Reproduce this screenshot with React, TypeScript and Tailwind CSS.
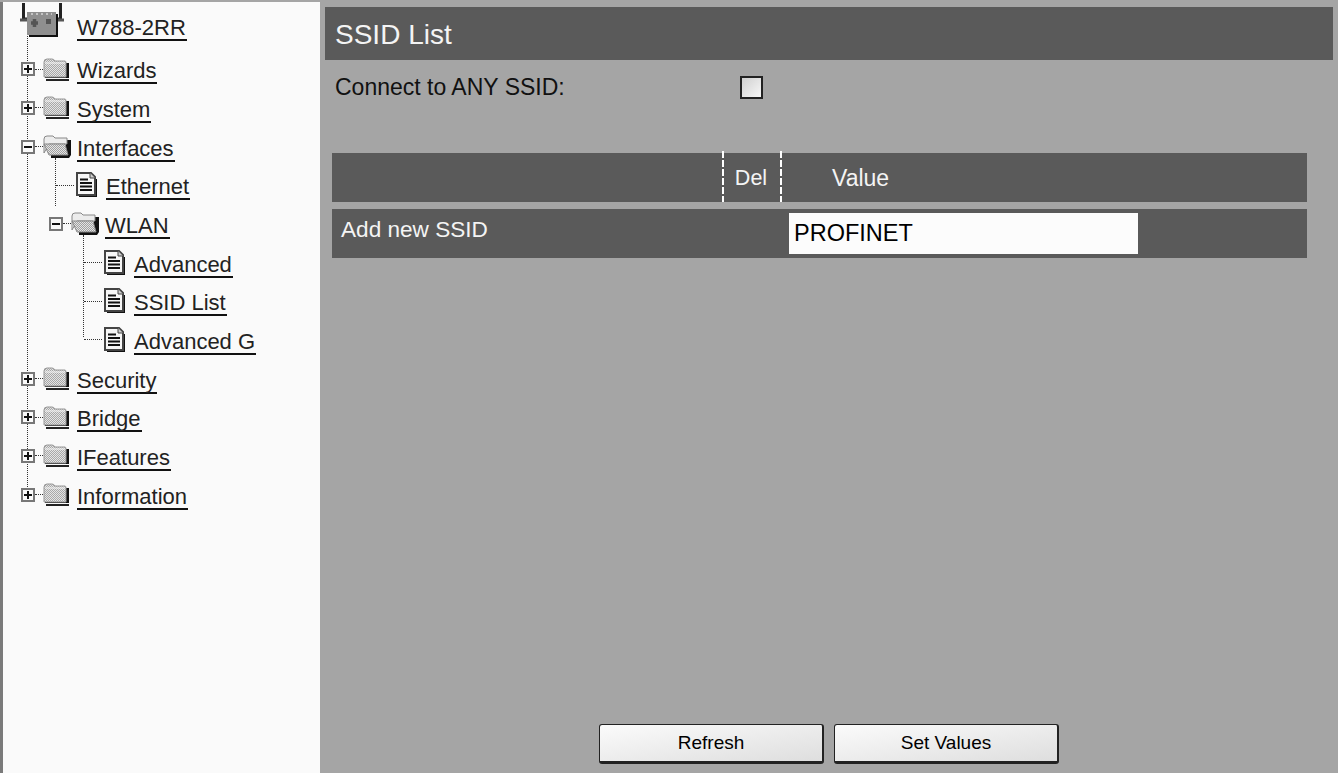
const font = { fontFamily: '"Liberation Sans", Arial, sans-serif' };

function ClosedFolder() {
  return (
    <svg width="26" height="23" viewBox="0 0 26 23" className="mb-1 shrink-0">
      <defs>
        <pattern id="ditherClosed" width="2" height="2" patternUnits="userSpaceOnUse">
          <rect width="2" height="2" fill="#e4e4e4" />
          <rect width="1" height="1" fill="#a8a8a8" />
          <rect x="1" y="1" width="1" height="1" fill="#a8a8a8" />
        </pattern>
      </defs>
      <path d="M2 20 H26 V5 H23 V19 H2 Z" fill="#111" />
      <rect x="3" y="21" width="23" height="2" fill="#222" />
      <path d="M1 19 V4 Q1 1 4 1 H9 Q11 1 12 3 H22 Q23 3 23 5 V19 Z" fill="url(#ditherClosed)" stroke="#999" strokeWidth="1" />
      <path d="M2 5 H22" stroke="#f4f4f4" strokeWidth="1" />
    </svg>
  );
}

function OpenFolder() {
  return (
    <svg width="28" height="23" viewBox="0 0 28 23" className="mb-1 shrink-0">
      <defs>
        <pattern id="ditherOpen" width="2" height="2" patternUnits="userSpaceOnUse">
          <rect width="2" height="2" fill="#e4e4e4" />
          <rect width="1" height="1" fill="#a0a0a0" />
          <rect x="1" y="1" width="1" height="1" fill="#a0a0a0" />
        </pattern>
      </defs>
      <path d="M23 5 H28 V20 L26 23 H8 V20 H23 Z" fill="#111" />
      <path d="M1 18 V4 Q1 1 4 1 H10 L12 3 H24 V9 H6 Z" fill="#ececec" stroke="#888" strokeWidth="1" />
      <path d="M1 9 H22 L25 20 H6 Z" fill="url(#ditherOpen)" stroke="#888" strokeWidth="1" />
    </svg>
  );
}

function PageIcon() {
  return (
    <svg width="21" height="26" viewBox="0 0 21 26" className="mb-1 shrink-0">
      <path d="M3 25 H21 V7 H19 V23 H3 Z" fill="#111" />
      <path d="M1 1 H15 L19 5 V23 H1 Z" fill="#f6f6f6" stroke="#444" strokeWidth="2" />
      <path d="M14 1 V6 H19" fill="#cfcfcf" stroke="#444" strokeWidth="1" />
      <path d="M4 7.5 H12 M4 11 H16 M4 14.5 H16 M4 18 H16" stroke="#111" strokeWidth="2" />
    </svg>
  );
}

function DeviceIcon() {
  return (
    <svg width="44" height="34" viewBox="0 0 44 34" className="shrink-0">
      <path d="M3.5 0 V16 H8 M40.5 0 V16 H35" stroke="#222" strokeWidth="3" fill="none" />
      <path d="M0 17 H8 M36 17 H44" stroke="#555" strokeWidth="3" />
      <rect x="9" y="11" width="29" height="23" fill="#111" />
      <rect x="7" y="9" width="29" height="23" fill="#8f8f8f" />
      <path d="M11 11 H32" stroke="#d8d8d8" strokeWidth="1.5" strokeDasharray="2 3" />
      <path d="M11 20 H18 M14.5 16 V24" stroke="#555" strokeWidth="3.5" />
      <rect x="26" y="16" width="5" height="5" fill="#555" />
    </svg>
  );
}

function ExpandBox({ open }: { open: boolean }) {
  return (
    <span className="relative mb-1 size-[14px] shrink-0 border-2 border-[#777] bg-[#fafafa]">
      <span className="absolute left-[1px] top-[4px] h-[2px] w-[8px] bg-[#111]" />
      {!open && <span className="absolute left-[4px] top-[1px] h-[8px] w-[2px] bg-[#111]" />}
    </span>
  );
}

function Label({ text }: { text: string }) {
  return (
    <span className="h-[26px] border-b-2 border-[#111] pr-[1px] text-[22px] leading-[26px] text-[#222]">
      {text}
    </span>
  );
}

function FolderRow({ text, open, indent }: { text: string; open?: boolean; indent: string }) {
  return (
    <div className={`flex h-[38.67px] items-center ${indent}`}>
      <ExpandBox open={!!open} />
      <span className="mb-1 w-[8px] shrink-0 border-t border-dotted border-[#333]" />
      {open ? <OpenFolder /> : <ClosedFolder />}
      <span className={open ? 'w-[6px] shrink-0' : 'w-[8px] shrink-0'} />
      <Label text={text} />
    </div>
  );
}

function PageRow({ text, indent }: { text: string; indent: string }) {
  return (
    <div className={`flex h-[38.67px] items-center ${indent}`}>
      <span className="mb-1 w-[18px] shrink-0 border-t border-dotted border-[#333]" />
      <span className="w-[2px] shrink-0" />
      <PageIcon />
      <span className="w-[9px] shrink-0" />
      <Label text={text} />
    </div>
  );
}

function Sidebar() {
  return (
    <aside className="h-full w-[317px] shrink-0 bg-[#fafafa]">
      <div className="flex h-[50px] items-start pl-[17px] pt-px">
        <DeviceIcon />
        <div className="ml-[13px] mt-[12px] flex">
          <Label text="W788-2RR" />
        </div>
      </div>
      <div className="relative">
        <span className="absolute left-[24px] top-[-16px] h-[461px] border-l border-dotted border-[#333]" />
        <FolderRow text="Wizards" indent="pl-[18px]" />
        <FolderRow text="System" indent="pl-[18px]" />
        <FolderRow text="Interfaces" open indent="pl-[18px]" />
        <div className="relative">
          <span className="absolute left-[52px] top-[-10px] h-[48px] border-l border-dotted border-[#333]" />
          <PageRow text="Ethernet" indent="pl-[53px]" />
          <FolderRow text="WLAN" open indent="pl-[46px]" />
          <div className="relative">
            <span className="absolute left-[80px] top-[-10px] h-[102px] border-l border-dotted border-[#333]" />
            <PageRow text="Advanced" indent="pl-[81px]" />
            <PageRow text="SSID List" indent="pl-[81px]" />
            <PageRow text="Advanced G" indent="pl-[81px]" />
          </div>
        </div>
        <FolderRow text="Security" indent="pl-[18px]" />
        <FolderRow text="Bridge" indent="pl-[18px]" />
        <FolderRow text="IFeatures" indent="pl-[18px]" />
        <FolderRow text="Information" indent="pl-[18px]" />
      </div>
    </aside>
  );
}

function ActionButton({ label }: { label: string }) {
  return (
    <button className="h-[40px] w-[225px] rounded-[3px] border border-b-[3px] border-r-[2px] border-[#222] bg-gradient-to-br from-[#fbfbfb] to-[#dedede] text-[19px] text-black">
      {label}
    </button>
  );
}

function DashedDivider() {
  return (
    <span className="h-[51px] w-[2px] shrink-0 bg-[repeating-linear-gradient(to_bottom,#ffffff_0,#ffffff_7px,#5a5a5a_7px,#5a5a5a_9px)]" />
  );
}

function Content() {
  return (
    <main className="flex h-full flex-1 flex-col bg-[#a5a5a5] pl-[5px] pr-[5px] pt-[5px]">
      <h1 className="flex h-[53px] shrink-0 items-center bg-[#5a5a5a] pl-[10px] pt-[2px] text-[28px] font-normal text-[#f4f4f4]">
        SSID List
      </h1>

      <div className="flex h-[54px] shrink-0 items-center pl-[10px]">
        <span className="w-[405px] text-[23px] text-[#111]">Connect to ANY SSID:</span>
        <input
          type="checkbox"
          className="h-[23px] w-[23px] appearance-none border-2 border-[#222] bg-gradient-to-br from-[#d0d0d0] to-[#f8f8f8]"
        />
      </div>

      <div className="ml-[7px] mr-[26px] mt-[39px] flex h-[49px] shrink-0 items-end bg-[#5a5a5a] text-[23px] text-[#f4f4f4]">
        <div className="w-[390px]" />
        <DashedDivider />
        <div className="flex h-[49px] w-[56px] items-center justify-center pr-[2px] pt-[2px] text-[21.5px]">Del</div>
        <DashedDivider />
        <div className="flex h-[49px] items-center pl-[50px] pt-[2px]">Value</div>
      </div>

      <div className="ml-[7px] mr-[26px] mt-[7px] flex h-[49px] shrink-0 items-center bg-[#5a5a5a]">
        <span className="w-[457px] pb-[7px] pl-[9px] text-[22.6px] text-[#f4f4f4]">Add new SSID</span>
        <input
          readOnly
          defaultValue="PROFINET"
          className="h-[41px] w-[349px] bg-[#fcfcfc] pl-[5px] text-[23.5px] text-black outline-none"
        />
      </div>

      <div className="mt-auto mb-[9px] flex justify-center gap-[10px]">
        <ActionButton label="Refresh" />
        <ActionButton label="Set Values" />
      </div>
    </main>
  );
}

export default function App() {
  return (
    <div className="flex h-[773px] w-[1338px] overflow-hidden bg-[#a5a5a5] pt-[2px]" style={font}>
      <div className="w-[3px] shrink-0 bg-[#7a7a7a]" />
      <Sidebar />
      <Content />
    </div>
  );
}
